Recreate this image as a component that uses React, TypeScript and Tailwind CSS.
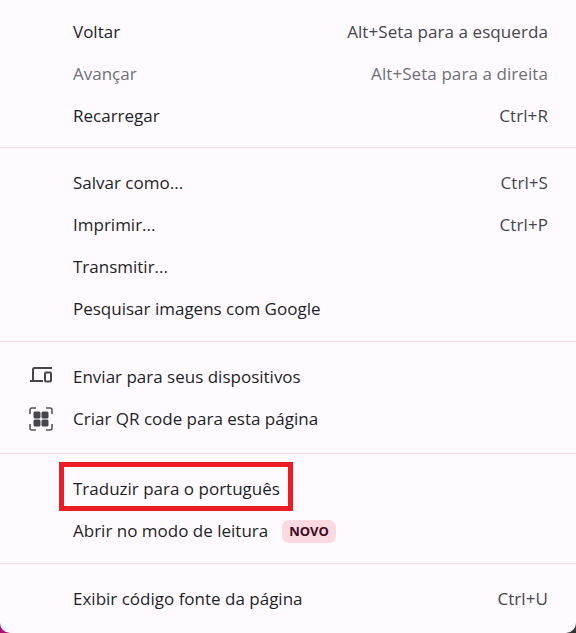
const font = "font-['Open_Sans','Noto_Sans',sans-serif]";

type Row = {
  label: string;
  shortcut?: string;
  disabled?: boolean;
  icon?: 'devices' | 'qr';
  badge?: string;
  boxed?: boolean;
};

function DevicesIcon() {
  return (
    <svg width="26" height="26" viewBox="0 0 26 26" fill="none" stroke="#45454d" strokeWidth="2">
      <path d="M5 17V5.500C5 4.500 5.500 4 6.500 4H24" />
      <path d="M2 17h13" />
      <rect x="17" y="8.500" width="6" height="9" rx="1" />
    </svg>
  );
}

function QrIcon() {
  return (
    <svg width="26" height="26" viewBox="0 0 26 26" fill="none">
      <path d="M2 8V4c0-1.300.700-2 2-2H8M18 2h4c1.300 0 2 .7 2 2V8M24 18v4c0 1.300-.7 2-2 2H18M8 24H4c-1.300 0-2-.7-2-2V18" stroke="#55555d" strokeWidth="1.600" />
      <rect x="5.500" y="5.500" width="7" height="7" rx="1.500" fill="#45454d" />
      <rect x="13.500" y="5.500" width="7" height="7" rx="1.500" fill="#45454d" />
      <rect x="5.500" y="13.500" width="7" height="7" rx="1.500" fill="#45454d" />
      <rect x="13.500" y="13.500" width="7" height="7" rx="1.500" fill="#45454d" />
    </svg>
  );
}

function MenuRow({ row }: { row: Row }) {
  return (
    <div className="flex h-[42px] items-center pl-[73px] pr-[28px]">
      <div className="relative flex items-center">
        {row.icon && (
          <span className="absolute left-[-45px] flex h-[26px] w-[26px] items-center justify-center">
            {row.icon === 'devices' ? <DevicesIcon /> : <QrIcon />}
          </span>
        )}
        <span className={row.disabled ? 'text-[#6f6f78]' : 'text-[#1f1f27]'}>{row.label}</span>
        {row.badge && (
          <span className="ml-[14px] rounded-[7px] bg-[#fbd9e0] px-[7px] text-[13px] leading-[23px] font-bold text-[#3f0a20]">
            {row.badge}
          </span>
        )}
        {row.boxed && (
          <span className="absolute top-[-16px] left-[-14px] h-[49px] w-[234px] border-[5px] border-[#ed1c24]" />
        )}
      </div>
      {row.shortcut && (
        <span className={`ml-auto tracking-[0.08px] ${row.disabled ? 'text-[#6f6f78]' : 'text-[#45454d]'}`}>
          {row.shortcut}
        </span>
      )}
    </div>
  );
}

function Section({ rows, className }: { rows: Row[]; className: string }) {
  return (
    <div className={className}>
      {rows.map((r) => (
        <MenuRow key={r.label} row={r} />
      ))}
    </div>
  );
}

export default function App() {
  return (
    <div className="h-[633px] w-[576px] overflow-hidden bg-[linear-gradient(90deg,#b0106e,#333)]">
      <div className={`${font} h-full rounded-b-[10px] bg-[#fefaff] text-[17px] leading-[22px]`}>
        <Section
          className="border-b border-[#f8dfe5] pt-[11px] pb-[10px]"
          rows={[
            { label: 'Voltar', shortcut: 'Alt+Seta para a esquerda' },
            { label: 'Avançar', shortcut: 'Alt+Seta para a direita', disabled: true },
            { label: 'Recarregar', shortcut: 'Ctrl+R' },
          ]}
        />
        <Section
          className="border-b border-[#f8dfe5] pt-[14px] pb-[11px]"
          rows={[
            { label: 'Salvar como...', shortcut: 'Ctrl+S' },
            { label: 'Imprimir...', shortcut: 'Ctrl+P' },
            { label: 'Transmitir...' },
            { label: 'Pesquisar imagens com Google' },
          ]}
        />
        <Section
          className="border-b border-[#f8dfe5] pt-[14px] pb-[13px]"
          rows={[
            { label: 'Enviar para seus dispositivos', icon: 'devices' },
            { label: 'Criar QR code para esta página', icon: 'qr' },
          ]}
        />
        <Section
          className="border-b border-[#f8dfe5] pt-[14px] pb-[11px]"
          rows={[
            { label: 'Traduzir para o português', boxed: true },
            { label: 'Abrir no modo de leitura', badge: 'NOVO' },
          ]}
        />
        <Section
          className="pt-[14px]"
          rows={[{ label: 'Exibir código fonte da página', shortcut: 'Ctrl+U' }]}
        />
      </div>
    </div>
  );
}
